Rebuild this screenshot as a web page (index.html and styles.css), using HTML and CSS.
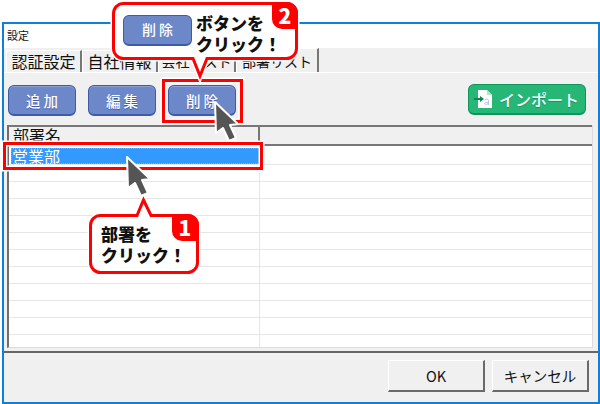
FILE: index.html
```html
<!DOCTYPE html>
<html lang="ja">
<head>
<meta charset="utf-8">
<title>設定</title>
<link rel="stylesheet" href="styles.css">
</head>
<body>
<div class="window">
  <div class="titlebar">設定</div>
  <div class="tabs">
    <div class="tab tab-first">認証設定</div>
    <div class="tab tab-second">自社情報</div>
    <div class="tab tab-third">会社リスト</div>
    <div class="tab tab-active">部署リスト</div>
  </div>
  <div class="panel">
    <div class="toolbar">
      <button class="blue-btn">追加</button>
      <button class="blue-btn">編集</button>
      <button class="blue-btn">削除</button>
      <button class="green-btn">
        <svg class="doc-icon" width="18" height="20" viewBox="0 0 18 20">
          <path d="M4 1H13L18 6V19H4Z" fill="#fff"/>
          <path d="M13 1L18 6H13Z" fill="#b5e2cc"/>
          <path d="M10.5 11q3-2 4 0v5M14.5 13.5q-4-1-4 1q1 2 4 0" fill="none" stroke="#b9c4e6" stroke-width="1"/>
          <path d="M0 9H6V7L10 10L6 13V11H0Z" fill="#0a8a4e"/>
        </svg>
        インポート
      </button>
    </div>
    <div class="list">
      <div class="list-head">
        <div class="head-cell">部署名</div>
        <div class="head-rest"></div>
      </div>
      <div class="list-body">
        <div class="row"><div class="cell selected">営業部</div><div class="cell-rest"></div></div>
        <div class="row"><div class="cell"></div><div class="cell-rest"></div></div>
        <div class="row"><div class="cell"></div><div class="cell-rest"></div></div>
        <div class="row"><div class="cell"></div><div class="cell-rest"></div></div>
        <div class="row"><div class="cell"></div><div class="cell-rest"></div></div>
        <div class="row"><div class="cell"></div><div class="cell-rest"></div></div>
        <div class="row"><div class="cell"></div><div class="cell-rest"></div></div>
        <div class="row"><div class="cell"></div><div class="cell-rest"></div></div>
        <div class="row"><div class="cell"></div><div class="cell-rest"></div></div>
        <div class="row"><div class="cell"></div><div class="cell-rest"></div></div>
        <div class="row"><div class="cell"></div><div class="cell-rest"></div></div>
        <div class="row"><div class="cell"></div><div class="cell-rest"></div></div>
      </div>
    </div>
  </div>
  <div class="footer">
    <button class="sys-btn">OK</button>
    <button class="sys-btn">キャンセル</button>
  </div>
</div>

<div class="mark mark-row"></div>
<div class="mark mark-btn"></div>

<svg class="cursor cursor-row" width="30" height="44" viewBox="0 0 30 44">
  <path d="M3 2L26 24L18 25L24 38L17 41L11 28L4 33Z" fill="#555" stroke="#fff" stroke-width="2" stroke-linejoin="round"/>
</svg>
<svg class="cursor cursor-btn" width="30" height="44" viewBox="0 0 30 44">
  <path d="M3 2L26 24L18 25L24 38L17 41L11 28L4 33Z" fill="#555" stroke="#fff" stroke-width="2" stroke-linejoin="round"/>
</svg>

<div class="callout callout-one">
  <svg width="114" height="82" viewBox="0 0 114 82">
    <path class="halo" d="M13.5 20.5H50L56.5 5L64 20.5H100.5a10 10 0 0 1 10 10V67.5a10 10 0 0 1-10 10H13.5a10 10 0 0 1-10-10V30.5a10 10 0 0 1 10-10Z"/>
    <path class="bubble" d="M13.5 20.5H50L56.5 5L64 20.5H100.5a10 10 0 0 1 10 10V67.5a10 10 0 0 1-10 10H13.5a10 10 0 0 1-10-10V30.5a10 10 0 0 1 10-10Z"/>
    <path class="badge" d="M85 19H101a11 11 0 0 1 11 11V46H95a10 10 0 0 1-10-10Z"/>
  </svg>
  <div class="badge-num">1</div>
  <div class="callout-text">部署を<br>クリック！</div>
</div>

<div class="callout callout-two">
  <svg width="190" height="82" viewBox="0 0 190 82">
    <path class="halo" d="M13.5 3.5H176.5a10 10 0 0 1 10 10V48.5a10 10 0 0 1-10 10H97L90 76L83 58.5H13.5a10 10 0 0 1-10-10V13.5a10 10 0 0 1 10-10Z"/>
    <path class="bubble" d="M13.5 3.5H176.5a10 10 0 0 1 10 10V48.5a10 10 0 0 1-10 10H97L90 76L83 58.5H13.5a10 10 0 0 1-10-10V13.5a10 10 0 0 1 10-10Z"/>
    <path class="badge" d="M162 2H177a11 11 0 0 1 11 11V29H172a10 10 0 0 1-10-10Z"/>
  </svg>
  <div class="badge-num">2</div>
  <div class="mini-btn">削除</div>
  <div class="callout-text">ボタンを<br>クリック！</div>
</div>
</body>
</html>
```
FILE: styles.css
```css
html, body {
  margin: 0;
  padding: 0;
  background: #fff;
}
body {
  width: 600px;
  height: 404px;
  position: relative;
  overflow: hidden;
  font-family: "Noto Sans CJK JP", "Liberation Sans", sans-serif;
  color: #111;
}
button {
  font-family: inherit;
  padding: 0;
  margin: 0;
}
.window {
  box-sizing: border-box;
  margin: 22px 0 0 2px;
  position: absolute;
  left: 0;
  top: 0;
  width: 598px;
  height: 382px;
  border: 2px solid #0f7fd8;
  background: #f0f0f0;
  display: flex;
  flex-direction: column;
}
.titlebar {
  height: 24px;
  flex: none;
  background: #fff;
  font-size: 11px;
  line-height: 16px;
  padding: 3px 0 0 3px;
  box-sizing: border-box;
}
.tabs {
  height: 24px;
  flex: none;
  display: flex;
  align-items: flex-end;
  padding-left: 2px;
  box-sizing: border-box;
  font-size: 16px;
  background: #f0f0f0;
}
.tab {
  box-sizing: border-box;
  height: 22px;
  line-height: 21px;
  text-align: center;
  background: #f0f0f0;
  border-top: 1px solid #fff;
  border-left: 1px solid #fff;
  border-right: 2px solid #777;
  white-space: nowrap;
}
.tab-first { width: 76px; }
.tab-second { width: 76px; }
.tab-third { width: 78px; font-size: 14px; }
.tab-active {
  width: 83px;
  height: 24px;
  line-height: 25px;
  font-size: 14px;
}
.panel {
  flex: none;
  height: 281px;
  box-sizing: border-box;
  background: #f0f0f0;
  border-top: 1px solid #fff;
  border-bottom: 2px solid #666;
  padding: 12px 5px 3px 3px;
  display: flex;
  flex-direction: column;
}
.toolbar {
  display: flex;
  align-items: flex-start;
  gap: 12px;
  padding-left: 1px;
  height: 40px;
  flex: none;
}
.blue-btn {
  box-sizing: border-box;
  width: 68px;
  height: 31px;
  background: #6d88c9;
  border: 1px solid #3d5ba8;
  border-bottom-width: 2px;
  border-radius: 6px;
  color: #fff;
  font-size: 14.5px;
  font-weight: 500;
  letter-spacing: 3px;
  text-indent: 3px;
  text-shadow: 0 1px 0 #3d5ba8;
  box-shadow: inset 0 1px 0 #8ba1d8;
}
.green-btn {
  box-sizing: border-box;
  width: 118px;
  height: 31px;
  margin-left: auto;
  margin-right: 7px;
  margin-top: -1px;
  background: #26b675;
  border: 1px solid #0f9459;
  border-bottom-width: 2px;
  border-radius: 6px;
  color: #fff;
  font-size: 16px;
  font-weight: 500;
  text-shadow: 0 1px 0 #0f9459;
  display: flex;
  align-items: center;
  gap: 7px;
  padding-left: 5px;
  white-space: nowrap;
}
.doc-icon { flex: none; }
.list {
  flex: 1;
  min-height: 0;
  box-sizing: border-box;
  border-left: 2px solid #6f6f6f;
  border-right: 1px solid #dcdcdc;
  border-bottom: 1px solid #dcdcdc;
  display: flex;
  flex-direction: column;
  background: #fff;
  overflow: hidden;
}
.list-head {
  flex: none;
  box-sizing: border-box;
  height: 21px;
  display: flex;
  background: #f0f0f0;
  border-top: 2px solid #777;
  border-bottom: 2px solid #777;
  font-size: 16px;
  line-height: 17px;
}
.head-cell {
  width: 251px;
  flex: none;
  box-sizing: border-box;
  padding-left: 4px;
  border-right: 2px solid #777;
}
.head-rest { flex: 1; }
.list-body {
  flex: 1;
  min-height: 0;
  overflow: hidden;
}
.row {
  box-sizing: border-box;
  height: 17px;
  display: flex;
  border-bottom: 1px solid #e6e6e6;
}
.row:first-child {
  height: 19px;
}
.cell {
  width: 251px;
  flex: none;
  box-sizing: border-box;
  border-right: 1px solid #e6e6e6;
}
.cell-rest { flex: 1; }
.selected {
  margin: 2px 0 0 2px;
  width: 249px;
  height: 16px;
  background: #3399ff;
  color: #fff;
  font-size: 16px;
  line-height: 16px;
  outline: 1px dotted #d9a05b;
  outline-offset: -1px;
  border-right: 0;
  padding-left: 1px;
}
.mark {
  position: absolute;
  box-sizing: border-box;
  border: 3px solid #f00;
  box-shadow: 0 0 0 1.5px #fff, inset 0 0 0 1.5px #fff;
}
.mark-row {
  left: 3px;
  top: 142px;
  width: 260px;
  height: 28px;
}
.mark-btn {
  left: 162px;
  top: 79px;
  width: 81px;
  height: 44px;
}
.cursor {
  position: absolute;
}
.cursor-row {
  left: 124px;
  top: 155px;
}
.cursor-btn {
  left: 212px;
  top: 100px;
}
.callout {
  position: absolute;
}
.callout svg {
  display: block;
}
.callout-one {
  left: 87px;
  top: 195px;
  width: 114px;
  height: 82px;
}
.callout-two {
  left: 110px;
  top: 0;
  width: 190px;
  height: 82px;
}
.halo {
  fill: none;
  stroke: #fff;
  stroke-width: 6;
}
.bubble {
  fill: #fff;
  stroke: #f00;
  stroke-width: 3;
}
.badge {
  fill: #f00;
}
.badge-num {
  position: absolute;
  width: 26px;
  text-align: center;
  color: #fff;
  font-size: 21px;
  font-weight: 900;
  line-height: 26px;
}
.callout-one .badge-num {
  left: 85px;
  top: 19px;
}
.callout-two .badge-num {
  left: 162px;
  top: 2px;
}
.callout-text {
  position: absolute;
  font-size: 17px;
  font-weight: 900;
  line-height: 21px;
  color: #111;
  white-space: nowrap;
}
.callout-one .callout-text {
  left: 14px;
  top: 28px;
}
.callout-two .callout-text {
  left: 86px;
  top: 12px;
}
.mini-btn {
  position: absolute;
  left: 13px;
  top: 15px;
  box-sizing: border-box;
  width: 69px;
  height: 31px;
  background: #6d88c9;
  border: 1px solid #3d5ba8;
  border-bottom-width: 2px;
  border-radius: 6px;
  color: #fff;
  font-size: 14px;
  line-height: 27px;
  font-weight: 500;
  letter-spacing: 3px;
  text-indent: 3px;
  text-align: center;
}
.footer {
  flex: 1;
  display: flex;
  justify-content: flex-end;
  align-items: flex-start;
  gap: 7px;
  padding: 7px 9px 0 0;
  background: #f0f0f0;
}
.sys-btn {
  box-sizing: border-box;
  width: 97px;
  height: 32px;
  background: #f0f0f0;
  border-top: 1px solid #fff;
  border-left: 1px solid #fff;
  border-right: 2px solid #6a6a6a;
  border-bottom: 2px solid #6a6a6a;
  color: #111;
  font-size: 14.5px;
  font-weight: 400;
}
```
